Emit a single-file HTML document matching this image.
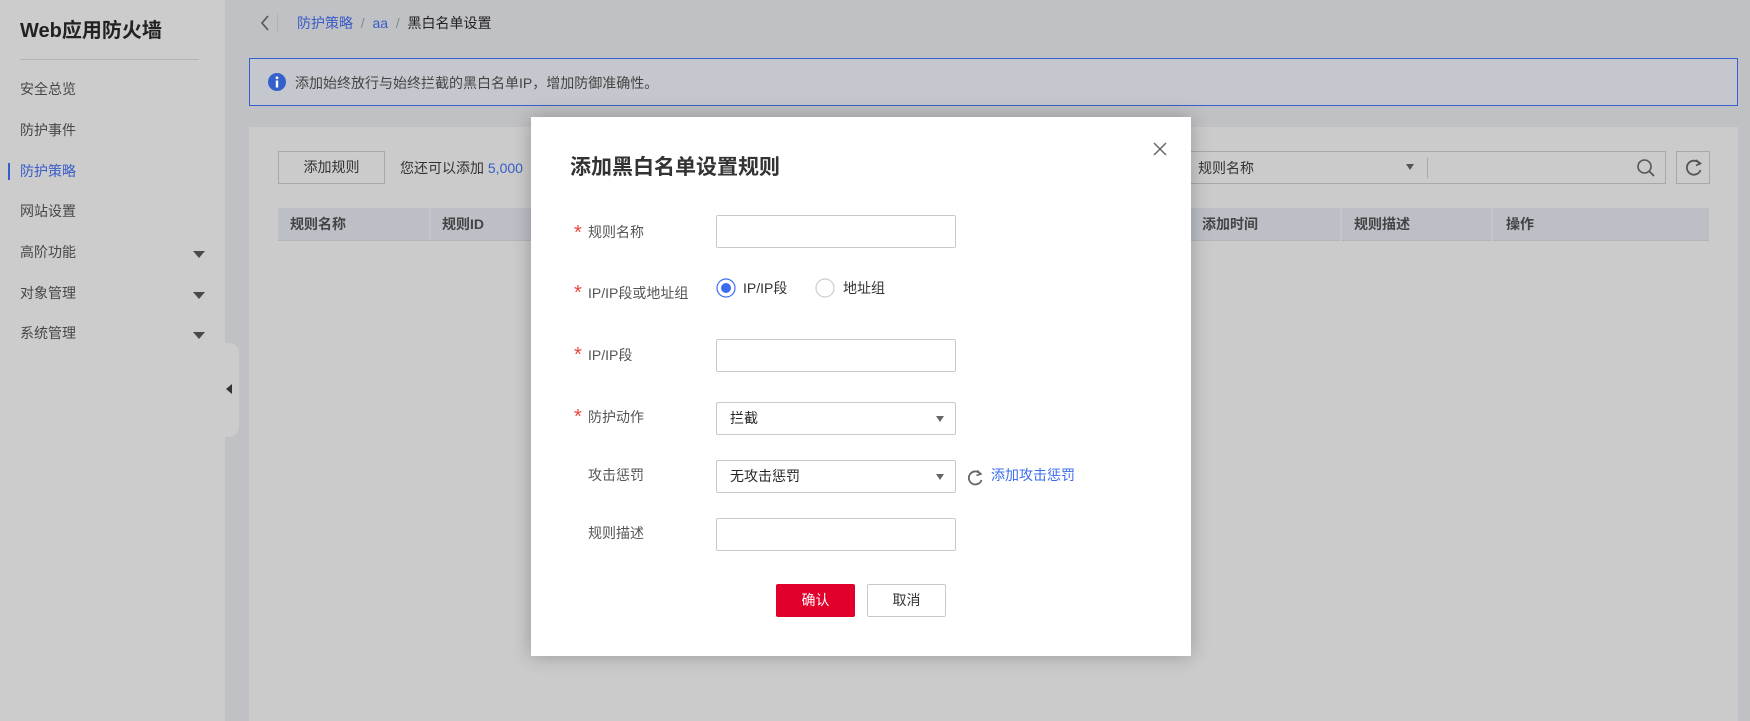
<!DOCTYPE html>
<html><head><meta charset="utf-8"><style>
*{box-sizing:border-box;margin:0;padding:0}
html{overflow:hidden;height:721px}
body{width:1750px;height:721px;overflow:hidden;position:relative;background:#c0c1c4;font-family:"Liberation Sans","Noto Sans CJK SC",sans-serif;font-size:14px;color:#2b2b2b}
.abs{position:absolute}
.side{left:0;top:0;width:225px;height:721px;background:#cccccc}
.side .t{left:20px;top:14px;font-size:20px;font-weight:bold;color:#222}
.side .dv{left:20px;top:59px;width:179px;height:1px;background:#b4b4b6}
.mi{left:20px;font-size:14px;color:#474747}
.arr{left:193px;width:0;height:0;border-left:6px solid transparent;border-right:6px solid transparent;border-top:7px solid #4a4a4a}
.handle{left:218px;top:343px;width:21px;height:94px;background:#cccccc;border-radius:0 10px 10px 0}
.bc{top:13px;font-size:14px}
.info{left:249px;top:58px;width:1489px;height:48px;background:#c4c7cd;border:1px solid #3560cc}
.card{left:249px;top:127px;width:1489px;height:594px;background:#cbcbcb}
.btn{border:1px solid #a8a8a8;background:#cbcbcb;text-align:center}
.th{top:208px;height:33px;background:#bcbfc6;border-bottom:1px solid #b3b5ba;font-weight:bold;color:#444;line-height:33px}
.modal{left:531px;top:117px;width:660px;height:539px;background:#fff;box-shadow:0 0 18px rgba(0,0,0,.25)}
.lbl{color:#555;font-size:14px}
.star{color:#e8453c;font-size:20px;line-height:20px}
.inp{border:1px solid #c9c9c9;border-radius:2px;background:#fff;width:240px;height:33px}
.sel{padding-left:13px;line-height:31px;color:#252525}
.tri{width:0;height:0;border-left:4px solid transparent;border-right:4px solid transparent;border-top:6px solid #666;right:11px;top:13px}
</style></head><body>
<div class="abs side">
<div class="abs t">Web应用防火墙</div>
<div class="abs dv"></div>
<div class="abs mi" style="top:79px">安全总览</div>
<div class="abs mi" style="top:120px">防护事件</div>
<div class="abs" style="left:8px;top:163px;width:2px;height:17px;background:#3560cc"></div>
<div class="abs mi" style="top:161px;color:#3a5bc8">防护策略</div>
<div class="abs mi" style="top:201px">网站设置</div>
<div class="abs mi" style="top:242px">高阶功能</div><div class="abs arr" style="top:251px"></div>
<div class="abs mi" style="top:283px">对象管理</div><div class="abs arr" style="top:292px"></div>
<div class="abs mi" style="top:323px">系统管理</div><div class="abs arr" style="top:332px"></div>
</div>
<div class="abs handle"><div class="abs" style="left:8px;top:41px;border-top:5px solid transparent;border-bottom:5px solid transparent;border-right:6px solid #333"></div></div>
<svg class="abs" style="left:259px;top:14px" width="12" height="18"><path d="M9 2 L3 9 L9 16" fill="none" stroke="#555" stroke-width="1.6"/></svg>
<div class="abs" style="left:277px;top:14px;width:1px;height:18px;background:#b0b1b4"></div>
<div class="abs bc" style="left:297px;color:#3a5bc8">防护策略 <span style="color:#888">&nbsp;/&nbsp;</span> aa <span style="color:#888">&nbsp;/&nbsp;</span> <span style="color:#222">黑白名单设置</span></div>
<div class="abs info">
<svg class="abs" style="left:18px;top:14px" width="18" height="18"><circle cx="9" cy="9" r="9" fill="#3560cc"/><rect x="7.8" y="7.5" width="2.4" height="7" fill="#fff"/><circle cx="9" cy="4.8" r="1.4" fill="#fff"/></svg>
<div class="abs" style="left:45px;top:14px;color:#444;font-size:14px">添加始终放行与始终拦截的黑白名单IP，增加防御准确性。</div>
</div>
<div class="abs card"></div>
<div class="abs btn" style="left:278px;top:151px;width:107px;height:33px;line-height:31px;color:#333">添加规则</div>
<div class="abs" style="left:400px;top:158px;color:#333">您还可以添加 <span style="color:#3a5bc8">5,000</span></div>
<div class="abs th" style="left:278px;width:1431px"></div>
<div class="abs th" style="left:429px;width:2px;background:#c4c6cb"></div>
<div class="abs th" style="left:290px;background:none;border:0">规则名称</div>
<div class="abs th" style="left:442px;background:none;border:0">规则ID</div>
<div class="abs" style="left:1340px;top:208px;width:2px;height:33px;background:#c4c6cb"></div>
<div class="abs" style="left:1491px;top:208px;width:2px;height:33px;background:#c4c6cb"></div>
<div class="abs th" style="left:1202px;background:none;border:0">添加时间</div>
<div class="abs th" style="left:1354px;background:none;border:0">规则描述</div>
<div class="abs th" style="left:1506px;background:none;border:0">操作</div>
<div class="abs" style="left:1150px;top:151px;width:516px;height:33px;border:1px solid #a8a8a8"></div>
<div class="abs" style="left:1198px;top:158px;color:#333">规则名称</div>
<div class="abs" style="left:1406px;top:164px;border-left:4px solid transparent;border-right:4px solid transparent;border-top:6px solid #555"></div>
<div class="abs" style="left:1427px;top:158px;width:1px;height:20px;background:#aaa"></div>
<svg class="abs" style="left:1636px;top:158px" width="20" height="20"><circle cx="8.5" cy="8.5" r="6.5" fill="none" stroke="#555" stroke-width="1.6"/><path d="M13 13 L18 18" stroke="#555" stroke-width="1.8"/></svg>
<div class="abs btn" style="left:1676px;top:151px;width:34px;height:33px"></div>
<svg class="abs" style="left:1684px;top:158px" width="20" height="20"><path d="M15.5 5.5 A7 7 0 1 0 16.5 12" fill="none" stroke="#555" stroke-width="1.8"/><path d="M12 2 L16.5 5.5 L12 7.5" fill="none" stroke="#555" stroke-width="1.6"/></svg>

<div class="abs modal">
<div class="abs" style="left:39px;top:34px;font-size:21px;font-weight:bold;color:#333">添加黑白名单设置规则</div>
<svg class="abs" style="left:622px;top:25px" width="14" height="14"><path d="M1 1 L13 13 M13 1 L1 13" stroke="#666" stroke-width="1.5"/></svg>
<div class="abs star" style="left:43px;top:106px">*</div><div class="abs lbl" style="left:57px;top:105px">规则名称</div>
<div class="abs inp" style="left:185px;top:98px"></div>
<div class="abs star" style="left:43px;top:166px">*</div><div class="abs lbl" style="left:57px;top:166px">IP/IP段或地址组</div>
<svg class="abs" style="left:185px;top:161px" width="20" height="20"><circle cx="10" cy="10" r="9" fill="#fff" stroke="#3b6cf0" stroke-width="1.2"/><circle cx="10" cy="10" r="5" fill="#3b6cf0"/></svg>
<div class="abs" style="left:212px;top:161px;color:#333">IP/IP段</div>
<svg class="abs" style="left:284px;top:161px" width="20" height="20"><circle cx="10" cy="10" r="9" fill="#fff" stroke="#ccc" stroke-width="1.2"/></svg>
<div class="abs" style="left:312px;top:161px;color:#333">地址组</div>
<div class="abs star" style="left:43px;top:228px">*</div><div class="abs lbl" style="left:57px;top:228px">IP/IP段</div>
<div class="abs inp" style="left:185px;top:222px"></div>
<div class="abs star" style="left:43px;top:290px">*</div><div class="abs lbl" style="left:57px;top:290px">防护动作</div>
<div class="abs inp sel" style="left:185px;top:285px">拦截<div class="abs tri"></div></div>
<div class="abs lbl" style="left:57px;top:348px">攻击惩罚</div>
<div class="abs inp sel" style="left:185px;top:343px">无攻击惩罚<div class="abs tri"></div></div>
<svg class="abs" style="left:435px;top:352px" width="18" height="18"><path d="M14.5 5 A6.5 6.5 0 1 0 15.5 11" fill="none" stroke="#666" stroke-width="1.8"/><path d="M11 1.5 L15 5 L10.5 6.5" fill="none" stroke="#666" stroke-width="1.5"/></svg>
<div class="abs" style="left:460px;top:348px;color:#3b6cf0">添加攻击惩罚</div>
<div class="abs lbl" style="left:57px;top:406px">规则描述</div>
<div class="abs inp" style="left:185px;top:401px"></div>
<div class="abs" style="left:245px;top:467px;width:79px;height:33px;background:#e1002b;border-radius:2px;color:#fff;text-align:center;line-height:33px">确认</div>
<div class="abs" style="left:336px;top:467px;width:79px;height:33px;border:1px solid #c9c9c9;border-radius:2px;color:#333;text-align:center;line-height:31px">取消</div>
</div>
</body></html>
